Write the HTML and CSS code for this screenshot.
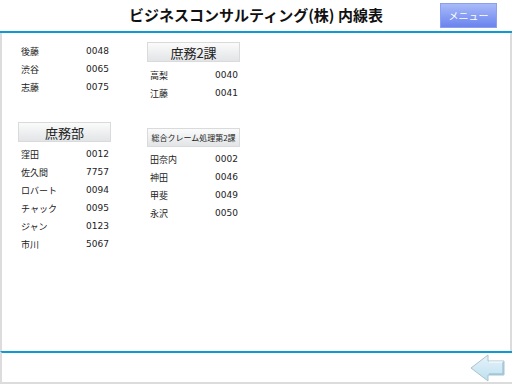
FILE: index.html
```html
<!DOCTYPE html>
<html lang="ja">
<head>
<meta charset="utf-8">
<link rel="stylesheet" href="styles.css">
</head>
<body>
<div class="page">
  <header class="header">
    <div></div>
    <h1 class="title">ビジネスコンサルティング(株) 内線表</h1>
    <div class="menu-wrap"><button class="menu">メニュー</button></div>
  </header>
  <main class="main">
    <section class="col col1">
      <ul class="list">
        <li><span>後藤</span><span>0048</span></li>
        <li><span>渋谷</span><span>0065</span></li>
        <li><span>志藤</span><span>0075</span></li>
      </ul>
      <div class="dept dept-a">庶務部</div>
      <ul class="list">
        <li><span>窪田</span><span>0012</span></li>
        <li><span>佐久間</span><span>7757</span></li>
        <li><span>ロバート</span><span>0094</span></li>
        <li><span>チャック</span><span>0095</span></li>
        <li><span>ジャン</span><span>0123</span></li>
        <li><span>市川</span><span>5067</span></li>
      </ul>
    </section>
    <section class="col col2">
      <div class="dept dept-b">庶務2課</div>
      <ul class="list">
        <li><span>高梨</span><span>0040</span></li>
        <li><span>江藤</span><span>0041</span></li>
      </ul>
      <div class="dept dept-c">総合クレーム処理第2課</div>
      <ul class="list">
        <li><span>田奈内</span><span>0002</span></li>
        <li><span>神田</span><span>0046</span></li>
        <li><span>甲斐</span><span>0049</span></li>
        <li><span>永沢</span><span>0050</span></li>
      </ul>
    </section>
  </main>
  <footer class="footer">
    <svg class="back" width="36" height="28" viewBox="0 0 36 28">
      <defs>
        <linearGradient id="ag" x1="0" y1="0" x2="0" y2="1">
          <stop offset="0" stop-color="#e6f3fa"/>
          <stop offset="1" stop-color="#bfe0f0"/>
        </linearGradient>
      </defs>
      <polygon points="1,14 18,1 18,7 34,7 34,21 18,21 18,27" fill="url(#ag)" stroke="#a9c3d0" stroke-width="1"/>
      <polyline points="19,8 33,8" fill="none" stroke="#ffffff" stroke-width="1"/>
      <polyline points="33,8 33,20 19,20" fill="none" stroke="#8fb8cc" stroke-width="1"/>
    </svg>
  </footer>
</div>
</body>
</html>
```
FILE: styles.css
```css
* { box-sizing: border-box; }
html, body { margin: 0; padding: 0; background: #fff; }
body { width: 512px; height: 384px; overflow: hidden; font-family: "DejaVu Sans", "Noto Sans CJK JP", sans-serif; color: #222; }
.page { width: 512px; height: 384px; display: flex; flex-direction: column; }
.header {
  height: 33px;
  display: grid;
  grid-template-columns: 1fr auto 1fr;
  align-items: center;
  border-bottom: 2px solid #0e9bd1;
  padding-bottom: 1px;
}
.title {
  margin: 0;
  font-family: "Noto Sans CJK JP", sans-serif;
  font-size: 15px;
  font-weight: bold;
  color: #111;
  line-height: 20px;
}
.menu-wrap { display: flex; justify-content: flex-end; padding-right: 15px; }
.menu {
  width: 57px; height: 25px;
  border: 1px solid #8a9ff0;
  background: linear-gradient(#a8baf8, #6a84ee);
  color: #fff;
  font-family: "Noto Sans CJK JP", sans-serif;
  font-size: 10px;
  padding: 0;
}
.main {
  flex: 1;
  display: flex;
  gap: 36px;
  padding: 9px 0 0 18px;
  border-left: 2px solid #dcdcdc;
  border-right: 2px solid #dcdcdc;
}
.main .col { width: 93px; display: flex; flex-direction: column; }
.col1 { margin-left: -2px; }
.list { list-style: none; margin: 0; padding: 0; }
.list li {
  height: 18px;
  display: flex; justify-content: space-between; align-items: center;
  padding: 0 2px 0 3px;
  font-size: 9px;
  color: #222;
}
.list li span:first-child { font-family: "Noto Sans CJK JP", sans-serif; font-size: 9px; }
.dept {
  height: 20px;
  display: flex; align-items: center; justify-content: center;
  border: 1px solid #d8dadc;
  background: linear-gradient(#fbfbfb, #e2e4e6);
  font-family: "Noto Sans CJK JP", sans-serif;
  color: #222;
  margin-bottom: 3px;
}
.dept-a { margin-top: 26px; font-size: 13px; }
.dept-b { font-size: 13px; margin-bottom: 4px; }
.dept-c { margin-top: 26px; font-size: 8px; height: 19px; }
.footer {
  height: 33px;
  border-top: 2px solid #0e9bd1;
  border-left: 2px solid #dcdcdc;
  border-bottom: 2px solid #dcdcdc;
  display: flex; justify-content: flex-end; align-items: center;
  padding-right: 6px;
}
```
